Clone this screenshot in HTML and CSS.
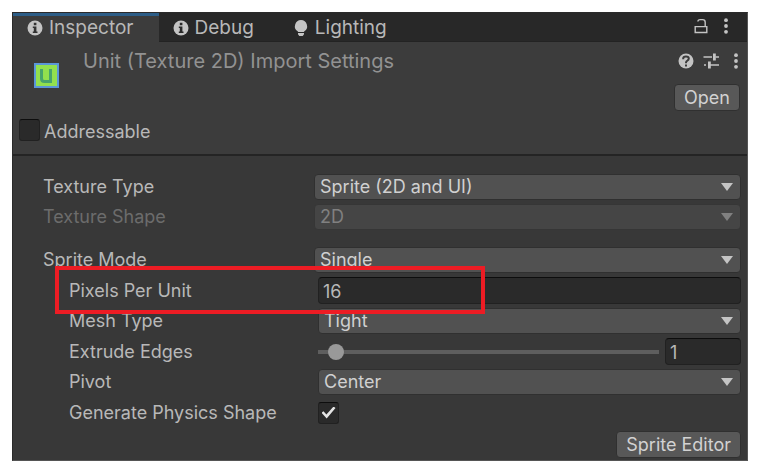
FILE: index.html
```html
<!DOCTYPE html>
<html lang="en">
<head>
<meta charset="utf-8">
<title>Inspector</title>
<link rel="stylesheet" href="styles.css">
</head>
<body>
<main class="panel">
  <div class="tabs">
    <button class="tab tab-active" type="button">
      <svg class="icon" viewBox="0 0 16 16"><circle cx="8" cy="8" r="7.5" fill="#c4c4c4"/><path d="M6.8 2.8h2.6v2.4H6.8zM5.8 6.6h3.6v5h1.1v1.5H5.8v-1.5h1V8.1h-1z" fill="#333"/></svg>
      <span>Inspector</span>
    </button>
    <button class="tab" type="button">
      <svg class="icon" viewBox="0 0 16 16"><circle cx="8" cy="8" r="7.5" fill="#c4c4c4"/><path d="M6.8 2.8h2.6v2.4H6.8zM5.8 6.6h3.6v5h1.1v1.5H5.8v-1.5h1V8.1h-1z" fill="#282828"/></svg>
      <span>Debug</span>
    </button>
    <button class="tab" type="button">
      <svg class="icon" viewBox="0 0 16 16"><path d="M8 0a6.200 6.200 0 0 1 3.400 11.300L10.800 12H5.200l-.6-.7A6.200 6.200 0 0 1 8 0zM5 13h6v1.200L9.700 16H6.300L5 14.200z" fill="#c4c4c4"/></svg>
      <span>Lighting</span>
    </button>
    <div class="tab-tools">
      <button class="tool" type="button" aria-label="Lock"><svg class="icon" viewBox="0 0 16 16"><path d="M2.200 8.600h11.600v5.900H2.200zM12.200 8.500V4.200Q12.200 1.600 9.600 1.600H7.200Q4.900 1.600 4.900 3.600" fill="none" stroke="#c4c4c4" stroke-width="1.4"/></svg></button>
      <button class="tool" type="button" aria-label="Tab menu"><svg class="dots" viewBox="0 0 6 16"><g fill="#c4c4c4"><circle cx="3" cy="2.2" r="1.9"/><circle cx="3" cy="8" r="1.9"/><circle cx="3" cy="13.8" r="1.9"/></g></svg></button>
    </div>
  </div>

  <header class="header">
    <div class="title-row">
      <svg class="thumb" viewBox="0 0 25 25"><path d="M1 1h23v23H1z" fill="#92e04e" stroke="#5a96d8" stroke-width="2"/><path d="M7.500 6v9.500q0 3 3 3h6V6" fill="none" stroke="#47a46c" stroke-width="3"/></svg>
      <h1 class="title">Unit (Texture 2D) Import Settings</h1>
      <div class="title-tools">
        <button class="tool" type="button" aria-label="Help"><svg class="icon" viewBox="0 0 16 16"><circle cx="8" cy="8" r="7.500" fill="#c4c4c4"/><path d="M5.200 6.300V5.500Q5.200 3.600 8 3.600t2.800 2q0 1.300-1.400 2T8 9.800v.4M8 11.400v2" fill="none" stroke="#3c3c3c" stroke-width="2"/></svg></button>
        <button class="tool" type="button" aria-label="Presets"><svg class="icon" viewBox="0 0 16 16"><path d="M.5 4H9M12.500 4H16M1 12h2M6.500 12H16" fill="none" stroke="#c4c4c4" stroke-width="1.600"/><path d="M10 .5h2.800v7H10zM5 8.500h2.800v7H5z" fill="#c4c4c4"/></svg></button>
        <button class="tool" type="button" aria-label="Menu"><svg class="dots" viewBox="0 0 6 16"><g fill="#c4c4c4"><circle cx="3" cy="2.200" r="1.900"/><circle cx="3" cy="8" r="1.900"/><circle cx="3" cy="13.800" r="1.900"/></g></svg></button>
      </div>
    </div>
    <div class="open-row"><button class="button" type="button">Open</button></div>
    <div class="address-row"><input class="check" type="checkbox" id="addressable"><label for="addressable">Addressable</label></div>
  </header>

  <form class="body">
    <section class="group">
      <div class="row">
        <label for="type">Texture Type</label>
        <div class="dropdown"><select id="type"><option>Sprite (2D and UI)</option></select><svg class="arrow" viewBox="0 0 12 8"><path d="M0 0h12L6 8z"/></svg></div>
      </div>
      <div class="row row-disabled">
        <label for="shape">Texture Shape</label>
        <div class="dropdown"><select id="shape" disabled><option>2D</option></select><svg class="arrow" viewBox="0 0 12 8"><path d="M0 0h12L6 8z"/></svg></div>
      </div>
    </section>
    <section class="group">
      <div class="row">
        <label for="mode">Sprite Mode</label>
        <div class="dropdown"><select id="mode"><option>Single</option></select><svg class="arrow" viewBox="0 0 12 8"><path d="M0 0h12L6 8z"/></svg></div>
      </div>
      <div class="row row-sub row-marked">
        <label for="ppu">Pixels Per Unit</label>
        <input class="field" id="ppu" type="text" value="16">
      </div>
      <div class="row row-sub">
        <label for="mesh">Mesh Type</label>
        <div class="dropdown"><select id="mesh"><option>Tight</option></select><svg class="arrow" viewBox="0 0 12 8"><path d="M0 0h12L6 8z"/></svg></div>
      </div>
      <div class="row row-sub">
        <label for="extrude">Extrude Edges</label>
        <div class="slider-set">
          <input class="slider" id="extrude" type="range" min="0" max="32" value="1">
          <input class="field field-short" type="text" value="1" aria-label="Extrude Edges value">
        </div>
      </div>
      <div class="row row-sub">
        <label for="pivot">Pivot</label>
        <div class="dropdown"><select id="pivot"><option>Center</option></select><svg class="arrow" viewBox="0 0 12 8"><path d="M0 0h12L6 8z"/></svg></div>
      </div>
      <div class="row row-sub row-check">
        <label for="physics">Generate Physics Shape</label>
        <input class="check" type="checkbox" id="physics" checked>
      </div>
    </section>
    <div class="footer"><button class="button" type="button">Sprite Editor</button></div>
  </form>
</main>
</body>
</html>
```
FILE: styles.css
```css
*, *::before, *::after { box-sizing: border-box; }

body {
  margin: 0;
  padding: 12px;
  background: #fff;
  color: #b8b8b8;
  font: 18px/24px Inter, "Liberation Sans", sans-serif;
}

button, input, select {
  margin: 0;
  border: 0;
  color: inherit;
  font: inherit;
}

svg { display: block; flex: none; }

.panel {
  background: #383838;
  border: 1px solid #2a2a2a;
  border-right-color: #555;
  border-bottom-color: #555;
}

.icon { width: 16px; height: 16px; }
.dots { width: 6px; height: 16px; }

/* Tab strip */
.tabs {
  display: flex;
  height: 29px;
  background: #282828;
  border-bottom: 1px solid #232323;
}

.tab {
  display: flex;
  align-items: center;
  gap: 6px;
  margin-bottom: -1px;
  padding: 1px 25px 0 14px;
  background: none;
  font-size: 19px;
}

.tab-active {
  background: #3c3c3c;
  border-top: 3px solid #2c5d87;
  padding-top: 0;
  padding-bottom: 2px;
}

.tab-tools, .title-tools {
  display: flex;
  align-items: center;
  margin-left: auto;
}

.tab-tools { gap: 14px; padding: 0 18px 2px 0; }
.title-tools { gap: 9px; }
.title-tools .tool:last-child { margin-left: 5px; }
.tool { padding: 0; background: none; }

/* Asset header */
.header {
  padding: 7px 7px 9px 21px;
  background: #3c3c3c;
  border-bottom: 2px solid #242424;
}

.title-row { display: flex; align-items: flex-start; padding-right: 1px; }
.thumb { width: 25px; height: 25px; margin-top: 14px; }

.title {
  margin: 0 0 0 24px;
  color: #929292;
  font-size: 20px;
  font-weight: 400;
  line-height: 24px;
}

.title-tools { height: 24px; }

.open-row, .footer { display: flex; justify-content: flex-end; }
.open-row { margin-top: -4px; }

.button {
  height: 27px;
  padding: 0 9px;
  background: #585858;
  border: 1px solid #303030;
  border-radius: 4px;
  color: #d2d2d2;
  line-height: 24px;
}

.address-row {
  display: flex;
  align-items: center;
  gap: 4px;
  margin: 8px 0 0 -15px;
}

.check {
  appearance: none;
  width: 21px;
  height: 22px;
  background: #2a2a2a;
  border: 1px solid #212121;
  border-top-color: #0d0d0d;
  border-radius: 3px;
}

.address-row .check { margin-bottom: 4px; }

.check:checked {
  display: grid;
  place-items: center;
}

.check:checked::before {
  content: "";
  width: 14px;
  height: 12px;
  background: #e4e4e4;
  clip-path: polygon(0 53%, 14% 40%, 35% 66%, 86% 0, 100% 12%, 37% 100%);
}

/* Property rows */
.body { padding: 16px 6px 2px 30px; }
.group + .group { margin-top: 13px; }

.row {
  display: grid;
  grid-template-columns: 271px 1fr;
  align-items: center;
  padding: 2px 0;
}

.row-sub {
  grid-template-columns: 249px 1fr;
  padding-left: 26px;
}

.row-disabled { color: #6c6c6c; }
.row-check { min-height: 31px; }

.row-marked { position: relative; }
.row-marked::after {
  content: "";
  position: absolute;
  top: -9px;
  bottom: -8px;
  left: 12px;
  width: 430px;
  border: 4px solid #ed1c24;
  pointer-events: none;
  z-index: 1;
}

.dropdown { position: relative; }

.dropdown select {
  appearance: none;
  display: block;
  width: 100%;
  height: 26px;
  padding: 0 24px 1px 5px;
  background: #515151;
  border: 1px solid #303030;
  border-radius: 4px;
  color: #d0d0d0;
  line-height: 23px;
}

.dropdown select:disabled {
  background: #454545;
  border-color: #363636;
  color: #808080;
  opacity: 1;
}

.arrow {
  position: absolute;
  top: 9px;
  right: 8px;
  width: 12px;
  height: 8px;
  fill: #c4c4c4;
  pointer-events: none;
}

.row-disabled .arrow { fill: #808080; }

.field {
  width: 100%;
  height: 27px;
  padding: 2px 4px 0;
  background: #2a2a2a;
  border: 1px solid #212121;
  border-top-color: #0d0d0d;
  border-radius: 4px;
}

.slider-set { display: flex; align-items: center; gap: 6px; }
.field-short { width: 76px; flex: none; }

.slider {
  appearance: none;
  flex: 1;
  min-width: 0;
  height: 16px;
  background: linear-gradient(#5e5e5e, #5e5e5e) center / 100% 4px no-repeat;
}

.slider::-webkit-slider-thumb {
  appearance: none;
  width: 16px;
  height: 16px;
  background: #999;
  border-radius: 50%;
}

.footer { margin-top: 3px; }
```
